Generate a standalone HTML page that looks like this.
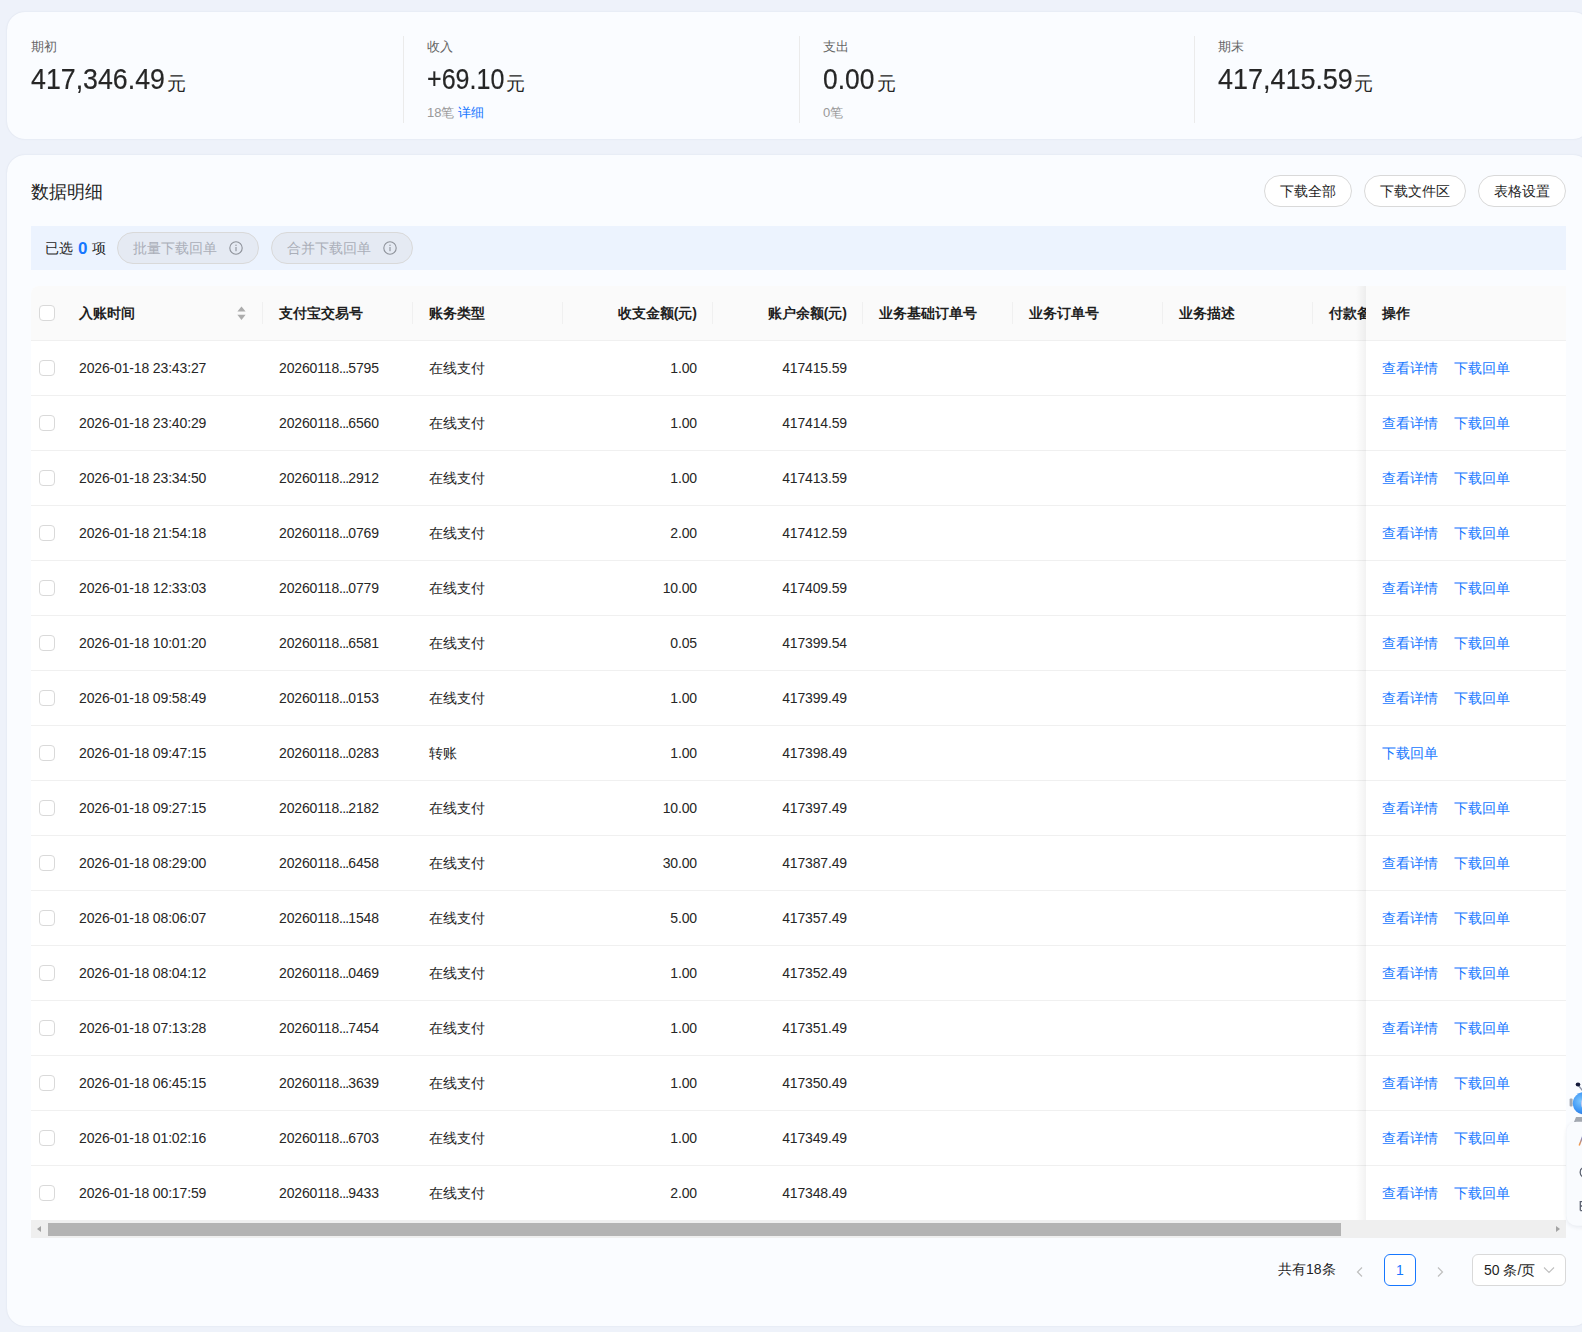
<!DOCTYPE html>
<html><head><meta charset="utf-8"><title>数据明细</title>
<style>
*{margin:0;padding:0;box-sizing:border-box}
html,body{width:1582px;height:1332px;overflow:hidden}
body{background:#eef2fa;font-family:"Liberation Sans",sans-serif;color:#1f1f1f;position:relative}
.card1{position:absolute;left:7px;top:12px;width:1584px;height:127px;background:#fafcff;border-radius:18px;box-shadow:0 0 1.5px rgba(110,125,150,0.22)}
.stat{position:absolute;top:0}
.lbl{position:absolute;top:27px;font-size:13px;color:#666;white-space:nowrap;line-height:16px}
.num{position:absolute;top:50px;white-space:nowrap;line-height:34px}
.num .n{position:absolute;left:0;top:0;font-size:30px;color:#262626;-webkit-text-stroke:0.2px #262626;display:inline-block;transform-origin:left center}
.num .y{position:absolute;top:5px;font-size:19px;color:#262626}
.sub{position:absolute;top:93px;font-size:13px;color:#999;white-space:nowrap;line-height:16px}
.blue{color:#1677ff}
.vd{position:absolute;top:24px;width:1px;height:87px;background:#ebebeb}
.card2{position:absolute;left:7px;top:155px;width:1584px;height:1171px;background:#fafcff;border-radius:18px;box-shadow:0 0 1.5px rgba(110,125,150,0.22)}
.title{position:absolute;left:24px;top:25px;font-size:18px;line-height:24px;color:#262626}
.btn{position:absolute;top:20px;height:32px;border:1px solid #d9d9d9;border-radius:16px;background:#fff;font-size:14px;line-height:30px;text-align:center;color:#1f1f1f}
.selbar{position:absolute;left:24px;top:71px;width:1535px;height:44px;background:#ecf3fe}
.sel{position:absolute;left:14px;top:0;line-height:44px;font-size:14px;color:#1f1f1f}
.sel b{color:#1677ff;font-size:17px;position:relative;top:1px;margin:0 1px}
.dbtn{position:absolute;top:6px;height:32px;border:1px solid #d9d9d9;border-radius:16px;background:#e5eaf3;color:#aaaeb8;font-size:14px;line-height:30px;padding-left:15px;white-space:nowrap}
.dbtn .info{position:absolute;right:15px;top:8px}
.table{position:absolute;left:31px;top:286px;width:1535px;height:952px;background:#fff;border-radius:8px 0 0 0;overflow:hidden}
.thead{position:absolute;left:0;top:0;width:1535px;height:55px;background:#fafafa;border-bottom:1px solid #f0f0f0;font-weight:bold;font-size:14px}
.thead span,.tr span{position:absolute;white-space:nowrap}
.thead span{line-height:54px}
.cb{left:8px;width:16px;height:16px;border:1px solid #d9d9d9;border-radius:4px;background:#fff}
.thead .cb{top:19px}
.sorter{left:206px;top:20px;line-height:0 !important}
.sep{top:16px;width:1px;height:22px;background:#f0f0f0}
.h1{left:48px}.h2{left:248px}.h3{left:398px}
.h4{right:869px}.h5{right:719px}
.h6{left:848px}.h7{left:998px}.h8{left:1148px}.h9{left:1298px}
.tr{position:absolute;left:0;width:1535px;height:55px;border-bottom:1px solid #f0f0f0;font-size:14px;color:#262626;letter-spacing:-0.15px}
.tr span{line-height:54px}
.tr .cb{top:19px}
.c1{left:48px}.c2{left:248px}.c3{left:398px}
.c4{right:869px}.c5{right:719px}
.fixed{position:absolute;left:1335px;top:0;width:200px;height:935px;background:#fff}
.fhead{position:absolute;left:0;top:0;width:200px;height:55px;background:#fafafa;border-bottom:1px solid #f0f0f0;font-weight:bold;font-size:14px;line-height:54px;padding-left:16px}
.ftr{position:absolute;left:0;width:200px;height:55px;border-bottom:1px solid #f0f0f0;font-size:14px;line-height:54px}
.lk{position:absolute;left:16px;color:#1677ff;white-space:nowrap}
.lk.l2{left:88px}
.shadow{position:absolute;left:1325px;top:0;width:10px;height:934px;background:linear-gradient(to right,rgba(0,0,0,0),rgba(0,0,0,0.05))}
.scroll{position:absolute;left:0;top:934px;width:1535px;height:18px;background:#efefef}
.thumb{position:absolute;left:17px;top:3px;width:1293px;height:13px;background:#b3b3b3}
.arl{position:absolute;left:6px;top:6px;width:0;height:0;border-top:3.5px solid transparent;border-bottom:3.5px solid transparent;border-right:4px solid #a3a3a3}
.arr{position:absolute;right:6px;top:6px;width:0;height:0;border-top:3.5px solid transparent;border-bottom:3.5px solid transparent;border-left:4px solid #a3a3a3}
.pager{position:absolute;left:0;top:0}
.total{position:absolute;left:1278px;top:1259px;font-size:14px;line-height:20px;white-space:nowrap}
.prev{position:absolute;left:1355px;top:1266px}
.next{position:absolute;left:1435px;top:1266px}
.page{position:absolute;left:1384px;top:1254px;width:32px;height:32px;border:1px solid #1677ff;border-radius:6px;color:#1677ff;font-size:14px;line-height:30px;text-align:center;background:#fff}
.psel{position:absolute;left:1472px;top:1254px;width:94px;height:32px;border:1px solid #d9d9d9;border-radius:6px;background:#fff;font-size:14px;line-height:30px;padding-left:11px;white-space:nowrap}
.chev{position:absolute;right:10px;top:11px}
.widget{position:absolute;left:1550px;top:1076px;overflow:visible}
.dots{font-style:normal;letter-spacing:-0.8px}
.k{font-style:normal;display:inline-block;width:1em;text-align:center;letter-spacing:0}

</style></head>
<body>
<div class="card1">
  <div class="stat" style="left:24px"><div class="lbl"><i class="k">期</i><i class="k">初</i></div><div class="num"><span class="n" style="transform:scaleX(0.892)">417,346.49</span><span class="y" style="left:136px"><i class="k">元</i></span></div></div>
  <div class="vd" style="left:396px"></div>
  <div class="stat" style="left:420px"><div class="lbl"><i class="k">收</i><i class="k">入</i></div><div class="num"><span class="n" style="transform:scaleX(0.835)">+69.10</span><span class="y" style="left:79px"><i class="k">元</i></span></div><div class="sub">18<i class="k">笔</i> <span class="blue"><i class="k">详</i><i class="k">细</i></span></div></div>
  <div class="vd" style="left:792px"></div>
  <div class="stat" style="left:816px"><div class="lbl"><i class="k">支</i><i class="k">出</i></div><div class="num"><span class="n" style="transform:scaleX(0.88)">0.00</span><span class="y" style="left:54px"><i class="k">元</i></span></div><div class="sub">0<i class="k">笔</i></div></div>
  <div class="vd" style="left:1187px"></div>
  <div class="stat" style="left:1211px"><div class="lbl"><i class="k">期</i><i class="k">末</i></div><div class="num"><span class="n" style="transform:scaleX(0.898)">417,415.59</span><span class="y" style="left:136px"><i class="k">元</i></span></div></div>
</div>
<div class="card2">
  <div class="title"><i class="k">数</i><i class="k">据</i><i class="k">明</i><i class="k">细</i></div>
  <div class="btn" style="left:1257px;width:88px"><i class="k">下</i><i class="k">载</i><i class="k">全</i><i class="k">部</i></div>
  <div class="btn" style="left:1357px;width:102px"><i class="k">下</i><i class="k">载</i><i class="k">文</i><i class="k">件</i><i class="k">区</i></div>
  <div class="btn" style="left:1471px;width:88px"><i class="k">表</i><i class="k">格</i><i class="k">设</i><i class="k">置</i></div>
  <div class="selbar"><span class="sel"><i class="k">已</i><i class="k">选</i> <b>0</b> <i class="k">项</i></span>
    <span class="dbtn" style="left:86px;width:142px"><i class="k">批</i><i class="k">量</i><i class="k">下</i><i class="k">载</i><i class="k">回</i><i class="k">单</i><svg class="info" width="14" height="14" viewBox="0 0 14 14"><circle cx="7" cy="7" r="6.2" fill="none" stroke="#8e929a" stroke-width="1.1"/><rect x="6.45" y="6" width="1.1" height="4.2" fill="#8e929a"/><circle cx="7" cy="4.2" r="0.7" fill="#8e929a"/></svg></span>
    <span class="dbtn" style="left:240px;width:142px"><i class="k">合</i><i class="k">并</i><i class="k">下</i><i class="k">载</i><i class="k">回</i><i class="k">单</i><svg class="info" width="14" height="14" viewBox="0 0 14 14"><circle cx="7" cy="7" r="6.2" fill="none" stroke="#8e929a" stroke-width="1.1"/><rect x="6.45" y="6" width="1.1" height="4.2" fill="#8e929a"/><circle cx="7" cy="4.2" r="0.7" fill="#8e929a"/></svg></span>
  </div>
</div>
<div class="table">
  <div class="thead"><span class="cb"></span><span class="h1"><i class="k">入</i><i class="k">账</i><i class="k">时</i><i class="k">间</i></span><span class="sorter"><svg width="9" height="15" viewBox="0 0 9 15"><path d="M4.5 0.6 L8.6 5.6 L0.4 5.6 Z" fill="#acacac"/><path d="M0.4 8.8 L8.6 8.8 L4.5 13.9 Z" fill="#acacac"/></svg></span>
    <span class="sep" style="left:231px"></span><span class="h2"><i class="k">支</i><i class="k">付</i><i class="k">宝</i><i class="k">交</i><i class="k">易</i><i class="k">号</i></span>
    <span class="sep" style="left:381px"></span><span class="h3"><i class="k">账</i><i class="k">务</i><i class="k">类</i><i class="k">型</i></span>
    <span class="sep" style="left:531px"></span><span class="h4"><i class="k">收</i><i class="k">支</i><i class="k">金</i><i class="k">额</i>(<i class="k">元</i>)</span>
    <span class="sep" style="left:681px"></span><span class="h5"><i class="k">账</i><i class="k">户</i><i class="k">余</i><i class="k">额</i>(<i class="k">元</i>)</span>
    <span class="sep" style="left:831px"></span><span class="h6"><i class="k">业</i><i class="k">务</i><i class="k">基</i><i class="k">础</i><i class="k">订</i><i class="k">单</i><i class="k">号</i></span>
    <span class="sep" style="left:981px"></span><span class="h7"><i class="k">业</i><i class="k">务</i><i class="k">订</i><i class="k">单</i><i class="k">号</i></span>
    <span class="sep" style="left:1131px"></span><span class="h8"><i class="k">业</i><i class="k">务</i><i class="k">描</i><i class="k">述</i></span>
    <span class="sep" style="left:1281px"></span><span class="h9"><i class="k">付</i><i class="k">款</i><i class="k">备</i><i class="k">注</i></span>
  </div>
  <div class="tr" style="top:55px"><span class="cb"></span><span class="c1">2026-01-18 23:43:27</span><span class="c2">20260118<i class="dots">...</i>5795</span><span class="c3"><i class="k">在</i><i class="k">线</i><i class="k">支</i><i class="k">付</i></span><span class="c4">1.00</span><span class="c5">417415.59</span></div><div class="tr" style="top:110px"><span class="cb"></span><span class="c1">2026-01-18 23:40:29</span><span class="c2">20260118<i class="dots">...</i>6560</span><span class="c3"><i class="k">在</i><i class="k">线</i><i class="k">支</i><i class="k">付</i></span><span class="c4">1.00</span><span class="c5">417414.59</span></div><div class="tr" style="top:165px"><span class="cb"></span><span class="c1">2026-01-18 23:34:50</span><span class="c2">20260118<i class="dots">...</i>2912</span><span class="c3"><i class="k">在</i><i class="k">线</i><i class="k">支</i><i class="k">付</i></span><span class="c4">1.00</span><span class="c5">417413.59</span></div><div class="tr" style="top:220px"><span class="cb"></span><span class="c1">2026-01-18 21:54:18</span><span class="c2">20260118<i class="dots">...</i>0769</span><span class="c3"><i class="k">在</i><i class="k">线</i><i class="k">支</i><i class="k">付</i></span><span class="c4">2.00</span><span class="c5">417412.59</span></div><div class="tr" style="top:275px"><span class="cb"></span><span class="c1">2026-01-18 12:33:03</span><span class="c2">20260118<i class="dots">...</i>0779</span><span class="c3"><i class="k">在</i><i class="k">线</i><i class="k">支</i><i class="k">付</i></span><span class="c4">10.00</span><span class="c5">417409.59</span></div><div class="tr" style="top:330px"><span class="cb"></span><span class="c1">2026-01-18 10:01:20</span><span class="c2">20260118<i class="dots">...</i>6581</span><span class="c3"><i class="k">在</i><i class="k">线</i><i class="k">支</i><i class="k">付</i></span><span class="c4">0.05</span><span class="c5">417399.54</span></div><div class="tr" style="top:385px"><span class="cb"></span><span class="c1">2026-01-18 09:58:49</span><span class="c2">20260118<i class="dots">...</i>0153</span><span class="c3"><i class="k">在</i><i class="k">线</i><i class="k">支</i><i class="k">付</i></span><span class="c4">1.00</span><span class="c5">417399.49</span></div><div class="tr" style="top:440px"><span class="cb"></span><span class="c1">2026-01-18 09:47:15</span><span class="c2">20260118<i class="dots">...</i>0283</span><span class="c3"><i class="k">转</i><i class="k">账</i></span><span class="c4">1.00</span><span class="c5">417398.49</span></div><div class="tr" style="top:495px"><span class="cb"></span><span class="c1">2026-01-18 09:27:15</span><span class="c2">20260118<i class="dots">...</i>2182</span><span class="c3"><i class="k">在</i><i class="k">线</i><i class="k">支</i><i class="k">付</i></span><span class="c4">10.00</span><span class="c5">417397.49</span></div><div class="tr" style="top:550px"><span class="cb"></span><span class="c1">2026-01-18 08:29:00</span><span class="c2">20260118<i class="dots">...</i>6458</span><span class="c3"><i class="k">在</i><i class="k">线</i><i class="k">支</i><i class="k">付</i></span><span class="c4">30.00</span><span class="c5">417387.49</span></div><div class="tr" style="top:605px"><span class="cb"></span><span class="c1">2026-01-18 08:06:07</span><span class="c2">20260118<i class="dots">...</i>1548</span><span class="c3"><i class="k">在</i><i class="k">线</i><i class="k">支</i><i class="k">付</i></span><span class="c4">5.00</span><span class="c5">417357.49</span></div><div class="tr" style="top:660px"><span class="cb"></span><span class="c1">2026-01-18 08:04:12</span><span class="c2">20260118<i class="dots">...</i>0469</span><span class="c3"><i class="k">在</i><i class="k">线</i><i class="k">支</i><i class="k">付</i></span><span class="c4">1.00</span><span class="c5">417352.49</span></div><div class="tr" style="top:715px"><span class="cb"></span><span class="c1">2026-01-18 07:13:28</span><span class="c2">20260118<i class="dots">...</i>7454</span><span class="c3"><i class="k">在</i><i class="k">线</i><i class="k">支</i><i class="k">付</i></span><span class="c4">1.00</span><span class="c5">417351.49</span></div><div class="tr" style="top:770px"><span class="cb"></span><span class="c1">2026-01-18 06:45:15</span><span class="c2">20260118<i class="dots">...</i>3639</span><span class="c3"><i class="k">在</i><i class="k">线</i><i class="k">支</i><i class="k">付</i></span><span class="c4">1.00</span><span class="c5">417350.49</span></div><div class="tr" style="top:825px"><span class="cb"></span><span class="c1">2026-01-18 01:02:16</span><span class="c2">20260118<i class="dots">...</i>6703</span><span class="c3"><i class="k">在</i><i class="k">线</i><i class="k">支</i><i class="k">付</i></span><span class="c4">1.00</span><span class="c5">417349.49</span></div><div class="tr" style="top:880px"><span class="cb"></span><span class="c1">2026-01-18 00:17:59</span><span class="c2">20260118<i class="dots">...</i>9433</span><span class="c3"><i class="k">在</i><i class="k">线</i><i class="k">支</i><i class="k">付</i></span><span class="c4">2.00</span><span class="c5">417348.49</span></div>
  <div class="fixed">
    <div class="fhead"><i class="k">操</i><i class="k">作</i></div>
    <div class="ftr" style="top:55px"><span class="lk"><i class="k">查</i><i class="k">看</i><i class="k">详</i><i class="k">情</i></span><span class="lk l2"><i class="k">下</i><i class="k">载</i><i class="k">回</i><i class="k">单</i></span></div><div class="ftr" style="top:110px"><span class="lk"><i class="k">查</i><i class="k">看</i><i class="k">详</i><i class="k">情</i></span><span class="lk l2"><i class="k">下</i><i class="k">载</i><i class="k">回</i><i class="k">单</i></span></div><div class="ftr" style="top:165px"><span class="lk"><i class="k">查</i><i class="k">看</i><i class="k">详</i><i class="k">情</i></span><span class="lk l2"><i class="k">下</i><i class="k">载</i><i class="k">回</i><i class="k">单</i></span></div><div class="ftr" style="top:220px"><span class="lk"><i class="k">查</i><i class="k">看</i><i class="k">详</i><i class="k">情</i></span><span class="lk l2"><i class="k">下</i><i class="k">载</i><i class="k">回</i><i class="k">单</i></span></div><div class="ftr" style="top:275px"><span class="lk"><i class="k">查</i><i class="k">看</i><i class="k">详</i><i class="k">情</i></span><span class="lk l2"><i class="k">下</i><i class="k">载</i><i class="k">回</i><i class="k">单</i></span></div><div class="ftr" style="top:330px"><span class="lk"><i class="k">查</i><i class="k">看</i><i class="k">详</i><i class="k">情</i></span><span class="lk l2"><i class="k">下</i><i class="k">载</i><i class="k">回</i><i class="k">单</i></span></div><div class="ftr" style="top:385px"><span class="lk"><i class="k">查</i><i class="k">看</i><i class="k">详</i><i class="k">情</i></span><span class="lk l2"><i class="k">下</i><i class="k">载</i><i class="k">回</i><i class="k">单</i></span></div><div class="ftr" style="top:440px"><span class="lk"><i class="k">下</i><i class="k">载</i><i class="k">回</i><i class="k">单</i></span></div><div class="ftr" style="top:495px"><span class="lk"><i class="k">查</i><i class="k">看</i><i class="k">详</i><i class="k">情</i></span><span class="lk l2"><i class="k">下</i><i class="k">载</i><i class="k">回</i><i class="k">单</i></span></div><div class="ftr" style="top:550px"><span class="lk"><i class="k">查</i><i class="k">看</i><i class="k">详</i><i class="k">情</i></span><span class="lk l2"><i class="k">下</i><i class="k">载</i><i class="k">回</i><i class="k">单</i></span></div><div class="ftr" style="top:605px"><span class="lk"><i class="k">查</i><i class="k">看</i><i class="k">详</i><i class="k">情</i></span><span class="lk l2"><i class="k">下</i><i class="k">载</i><i class="k">回</i><i class="k">单</i></span></div><div class="ftr" style="top:660px"><span class="lk"><i class="k">查</i><i class="k">看</i><i class="k">详</i><i class="k">情</i></span><span class="lk l2"><i class="k">下</i><i class="k">载</i><i class="k">回</i><i class="k">单</i></span></div><div class="ftr" style="top:715px"><span class="lk"><i class="k">查</i><i class="k">看</i><i class="k">详</i><i class="k">情</i></span><span class="lk l2"><i class="k">下</i><i class="k">载</i><i class="k">回</i><i class="k">单</i></span></div><div class="ftr" style="top:770px"><span class="lk"><i class="k">查</i><i class="k">看</i><i class="k">详</i><i class="k">情</i></span><span class="lk l2"><i class="k">下</i><i class="k">载</i><i class="k">回</i><i class="k">单</i></span></div><div class="ftr" style="top:825px"><span class="lk"><i class="k">查</i><i class="k">看</i><i class="k">详</i><i class="k">情</i></span><span class="lk l2"><i class="k">下</i><i class="k">载</i><i class="k">回</i><i class="k">单</i></span></div><div class="ftr" style="top:880px"><span class="lk"><i class="k">查</i><i class="k">看</i><i class="k">详</i><i class="k">情</i></span><span class="lk l2"><i class="k">下</i><i class="k">载</i><i class="k">回</i><i class="k">单</i></span></div>
  </div>
  <div class="shadow"></div>
  <div class="scroll"><span class="arl"></span><span class="thumb"></span><span class="arr"></span></div>
</div>
<div class="pager">
  <span class="total"><i class="k">共</i><i class="k">有</i>18<i class="k">条</i></span>
  <svg class="prev" width="10" height="12" viewBox="0 0 10 12"><path d="M7 1.5 L2.5 6 L7 10.5" fill="none" stroke="#bfbfbf" stroke-width="1.2"/></svg>
  <span class="page">1</span>
  <svg class="next" width="10" height="12" viewBox="0 0 10 12"><path d="M3 1.5 L7.5 6 L3 10.5" fill="none" stroke="#bfbfbf" stroke-width="1.2"/></svg>
  <span class="psel">50 <i class="k">条</i>/<i class="k">页</i><svg class="chev" width="12" height="8" viewBox="0 0 12 8"><path d="M1 1.5 L6 6.5 L11 1.5" fill="none" stroke="#bfbfbf" stroke-width="1.1"/></svg></span>
</div>
<svg class="widget" width="40" height="166" viewBox="1550 1076 40 166">
<defs><radialGradient id="rg" cx="0.35" cy="0.4" r="0.7"><stop offset="0" stop-color="#7cc6ff"/><stop offset="0.6" stop-color="#3d96f5"/><stop offset="1" stop-color="#2a6fd6"/></radialGradient>
<linearGradient id="ag" x1="0" y1="1" x2="1" y2="0"><stop offset="0" stop-color="#ff9a3c"/><stop offset="1" stop-color="#4a7dff"/></linearGradient>
<filter id="sh" x="-50%" y="-20%" width="200%" height="140%"><feGaussianBlur stdDeviation="2.2"/></filter></defs>
<path d="M1576.6 1083.2 L1583 1091" stroke="#8a93a6" stroke-width="1.4"/>
<ellipse cx="1578" cy="1084.5" rx="2.3" ry="1.9" fill="#141a3a"/>
<rect x="1569.6" y="1098.6" width="3" height="8" rx="1" fill="#a3a9b3"/>
<circle cx="1584" cy="1103.3" r="11.2" fill="url(#rg)"/>
<ellipse cx="1587" cy="1103.5" rx="6" ry="7.5" fill="#c9cdf0"/>
<ellipse cx="1588" cy="1103.5" rx="4.6" ry="6.2" fill="#3b4aa6"/>
<path d="M1576 1117 L1590 1117 L1590 1122 L1574 1122 Z" fill="#a4a9b1"/>
<rect x="1566.5" y="1123" width="30" height="104" rx="10" fill="#1a2a50" opacity="0.09" filter="url(#sh)"/>
<rect x="1566.5" y="1121.7" width="30" height="104" rx="10" fill="#f9fbfe"/>
<path d="M1579.2 1145.5 L1582.5 1137 L1585 1137" stroke="url(#ag)" stroke-width="1.5" fill="none"/>
<path d="M1583.5 1167.6 A4.2 4.8 0 0 0 1583.5 1177" stroke="#5b6170" stroke-width="1.3" fill="none"/>
<path d="M1580.3 1210.6 L1580.3 1201.6 L1584 1201.6 M1580.3 1206 L1584 1206 M1580.3 1210.6 L1584 1210.6" stroke="#5b6170" stroke-width="1.3" fill="none"/>
</svg>
</body></html>
